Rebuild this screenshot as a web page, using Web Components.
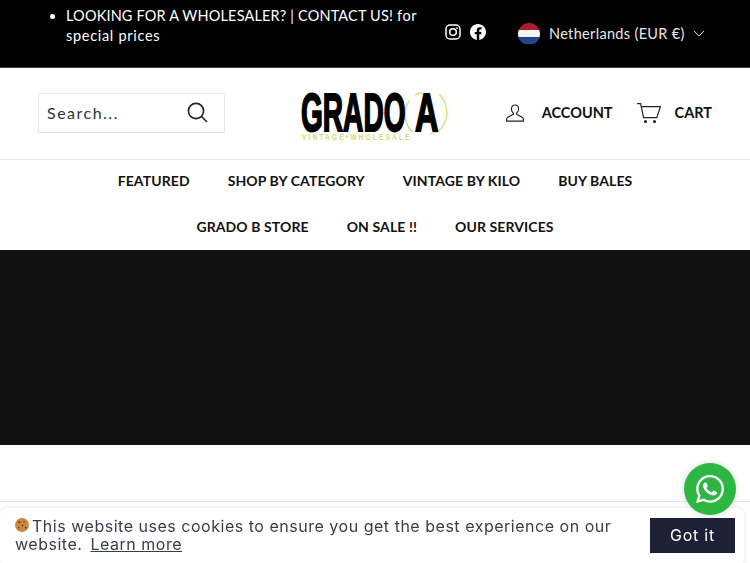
<!DOCTYPE html>
<html>
<head>
<meta charset="utf-8">
<title>Grado A</title>
<style>
html,body{margin:0;height:563px;overflow:hidden;background:#fff;}
body{font-family:"Lato","Open Sans",sans-serif;}
</style>
</head>
<body>
<top-bar>
  <span slot="promo">LOOKING FOR A WHOLESALER? | CONTACT US! </span><span slot="promo" style="letter-spacing:.7px">for</span>
  <span slot="promo2" style="display:block;letter-spacing:.7px">special prices</span>
</top-bar>
<site-header></site-header>
<site-nav>
  <nav-link>FEATURED</nav-link>
  <nav-link>SHOP BY CATEGORY</nav-link>
  <nav-link>VINTAGE BY KILO</nav-link>
  <nav-link>BUY BALES</nav-link>
  <nav-link>GRADO B STORE</nav-link>
  <nav-link>ON SALE !!</nav-link>
  <nav-link>OUR SERVICES</nav-link>
</site-nav>
<hero-block></hero-block>
<page-footer></page-footer>
<cookie-bar></cookie-bar>
<whatsapp-button></whatsapp-button>
<script>
class topBar extends HTMLElement{
    constructor(){
        super();
        this.attachShadow({mode:'open'});
        this.shadowRoot.innerHTML=`<style>
        :host{display:flex;height:67px;background:#000;color:#fff;border-bottom:1px solid #444;font:400 14.5px/20px "Lato",sans-serif;letter-spacing:.16px;}
        ul{margin:0;padding:6px 0 0 66px;width:360px;box-sizing:content-box;flex:none;}
        li{padding:0;}
        .social{display:flex;gap:9px;margin:24px 0 0 19px;flex:none;align-items:flex-start;}
        .social svg{display:block;width:16px;height:16px;}
        .country{display:flex;align-items:center;margin:0 0 0 32px;height:67px;color:#e8e8e8;font-size:14.5px;letter-spacing:.33px;}
        .flag{width:22px;height:22px;border-radius:50%;overflow:hidden;margin-right:9px;display:flex;flex-direction:column;}
        .flag i{flex:1;}
        .chev{margin-left:8px;}
        </style>
        <ul><li><slot name="promo"></slot><slot name="promo2"></slot></li></ul>
        <div class="social">
          <svg viewBox="0 0 16 16" fill="none" stroke="#fff" stroke-width="1.5"><rect x="1" y="1" width="14" height="14" rx="4"/><circle cx="8" cy="8" r="3.3"/><circle cx="12" cy="4" r=".6" fill="#fff" stroke-width=".6"/></svg>
          <svg viewBox="0 0 24 24" fill="#fff"><path d="M24 12.073c0-6.627-5.373-12-12-12s-12 5.373-12 12c0 5.99 4.388 10.954 10.125 11.854v-8.385H7.078v-3.47h3.047V9.43c0-3.007 1.792-4.669 4.533-4.669 1.312 0 2.686.235 2.686.235v2.953H15.83c-1.491 0-1.956.925-1.956 1.874v2.25h3.328l-.532 3.47h-2.796v8.385C19.612 23.027 24 18.062 24 12.073z"/></svg>
        </div>
        <div class="country">
          <span class="flag"><i style="background:#ae1c28"></i><i style="background:#f4f4f4"></i><i style="background:#21468b"></i></span>
          <span>Netherlands (EUR €)</span>
          <svg class="chev" width="12" height="7" viewBox="0 0 12 7" fill="none" stroke="#ddd" stroke-width="1"><path d="M1 1l5 5 5-5"/></svg>
        </div>`;
    }
}
class siteHeader extends HTMLElement{
    constructor(){
        super();
        this.attachShadow({mode:'open'});
        this.shadowRoot.innerHTML=`<style>
        :host{display:grid;grid-template-columns:225px 1fr auto;align-items:center;height:91px;padding:0 38px;border-bottom:1px solid #e6e6e6;color:#111;}
        .search{display:flex;align-items:center;justify-content:space-between;width:187px;height:40px;box-sizing:border-box;border:1px solid #e8e8e8;padding:0 16px 0 8px;margin-bottom:2px;font-size:16px;letter-spacing:1.5px;color:#333;}
        .search svg{display:block;}
        .right{display:flex;align-items:center;margin-bottom:2px;font:700 14.5px "Lato",sans-serif;}
        .right svg{display:block;}
        .acct{margin-right:18px;}
        .cart{margin:0 14px 0 24px;}
        </style>
        <div class="search"><span>Search...</span>
          <svg width="21" height="21" viewBox="0 0 21 21" fill="none" stroke="#222" stroke-width="1.6"><circle cx="9" cy="9" r="7.6"/><path d="M14.5 14.5l5.5 5.5"/></svg>
        </div>
        <grado-logo></grado-logo>
        <div class="right">
          <svg class="acct" width="18" height="18" viewBox="0 0 18 18" fill="none" stroke="#222" stroke-width="1.2"><path d="M9 1c2.2 0 3.6 1.7 3.6 3.9 0 1.9-1 3.3-1.8 4.1-.3.4-.2 1.2.3 1.5l5 2.7c.9.5 1.3 1.4 1.3 2.6v1.4H.6v-1.4c0-1.2.4-2.1 1.3-2.6l5-2.7c.5-.3.6-1.1.3-1.5-.8-.8-1.8-2.2-1.8-4.1C5.4 2.7 6.8 1 9 1z"/></svg>
          <span>ACCOUNT</span>
          <svg class="cart" width="24" height="20" viewBox="0 0 24 20" fill="none" stroke="#222" stroke-width="1.2"><path d="M0 .6h3.6l3 14h13.2L23.4 3.6H4.4"/><circle cx="8.5" cy="18.6" r=".9" fill="#222"/><circle cx="17.5" cy="18.6" r=".9" fill="#222"/></svg>
          <span>CART</span>
        </div>`;
    }
}
class gradoLogo extends HTMLElement{
    constructor(){
        super();
        this.attachShadow({mode:'open'});
        this.shadowRoot.innerHTML=`<style>
        :host{display:block;position:relative;width:155px;height:54px;margin-left:38px;overflow:visible;}
        .word{position:absolute;left:0;top:5px;font:900 54px/40px "Liberation Sans",sans-serif;color:#000;-webkit-text-stroke:2px #000;transform-origin:0 0;white-space:nowrap;}
        .g{transform:scaleX(.52);}
        .a{left:114px;transform:scaleX(.6);}
        .tag{position:absolute;left:1px;top:45px;font:700 9.5px/9px "Liberation Sans",sans-serif;letter-spacing:3px;color:#cfdc6f;white-space:nowrap;transform-origin:0 0;transform:scaleX(.7);}
        svg{position:absolute;left:102px;top:3px;}
        </style>
        <svg width="46" height="48" viewBox="0 0 46 48" fill="none" stroke="#d5e07f" stroke-width="1.5"><path d="M10 42C2 36-1 22 6 11"/><path d="M12 5c2-1 5-2 8-2"/><path d="M36 4c8 7 10 22 5 30-2 4-7 9-14 10"/></svg>
        <span class="word g">GRADO</span>
        <span class="word a">A</span>
        <span class="tag">VINTAGE•WHOLESALE</span>`;
    }
}
class siteNav extends HTMLElement{
    constructor(){
        super();
        this.attachShadow({mode:'open'});
        this.shadowRoot.innerHTML=`<style>
        :host{display:flex;flex-wrap:wrap;justify-content:center;width:600px;margin:0 auto;column-gap:38px;height:90px;padding-left:0;align-content:flex-start;}
        </style><slot></slot>`;
    }
}
class navLink extends HTMLElement{
    constructor(){
        super();
        this.attachShadow({mode:'open'});
        this.shadowRoot.innerHTML=`<style>
        :host{display:block;height:46px;font:700 14px/41px "Lato",sans-serif;letter-spacing:.1px;color:#111;white-space:nowrap;}
        </style><slot></slot>`;
    }
}
class heroBlock extends HTMLElement{
    constructor(){
        super();
        this.attachShadow({mode:'open'});
        this.shadowRoot.innerHTML=`<style>
        :host{display:block;height:195px;background:#111;}
        </style>`;
    }
}
class pageFooter extends HTMLElement{
    constructor(){
        super();
        this.attachShadow({mode:'open'});
        this.shadowRoot.innerHTML=`<style>
        :host{display:block;margin-top:56px;border-top:1px solid #e6e6e6;}
        </style>`;
    }
}
class cookieBar extends HTMLElement{
    constructor(){
        super();
        this.attachShadow({mode:'open'});
        this.shadowRoot.innerHTML=`<style>
        :host{position:fixed;left:0;right:6px;bottom:-4px;height:59px;box-sizing:border-box;display:flex;align-items:flex-start;justify-content:space-between;background:#fff;border-radius:8px;box-shadow:0 0 4px rgba(0,0,0,.12);padding:9px 9px 0 15px;font:400 16px/18px "Inter",sans-serif;color:#3a3d4a;}
        .msg{width:610px;letter-spacing:.52px;}
        svg{vertical-align:0;margin-right:3px;}
        a{color:#3a3d4a;text-decoration:underline;margin-left:8px;}
        button{width:85px;height:35px;margin-top:1px;padding:0 0 2px;background:#1c2135;color:#fff;border:0;border-radius:0;font:400 16px "Inter",sans-serif;letter-spacing:.8px;}
        </style>
        <div class="msg">
          <div><svg width="14" height="14" viewBox="0 0 13 13"><circle cx="6.5" cy="6.5" r="6.5" fill="#c98a3e"/><g fill="#5b3415"><circle cx="4" cy="4" r=".9"/><circle cx="8.5" cy="3.5" r=".7"/><circle cx="7" cy="7" r=".8"/><circle cx="3.5" cy="9" r=".7"/><circle cx="10" cy="9" r=".8"/></g></svg>This website uses cookies to ensure you get the best experience on our</div>
          <div><span>website.</span><a>Learn more</a></div>
        </div>
        <button>Got it</button>`;
    }
}
class whatsappButton extends HTMLElement{
    constructor(){
        super();
        this.attachShadow({mode:'open'});
        this.shadowRoot.innerHTML=`<style>
        :host{position:fixed;left:684px;top:463px;width:52px;height:52px;border-radius:50%;background:#2db742;display:flex;align-items:center;justify-content:center;box-shadow:0 0 6px rgba(0,0,0,.15);}
        svg{display:block;}
        </style>
        <svg width="28" height="28" viewBox="0 0 24 24" fill="#fff"><path d="M17.472 14.382c-.297-.149-1.758-.867-2.03-.967-.273-.099-.471-.148-.67.15-.197.297-.767.966-.94 1.164-.173.199-.347.223-.644.075-.297-.15-1.255-.463-2.39-1.475-.883-.788-1.48-1.761-1.653-2.059-.173-.297-.018-.458.13-.606.134-.133.298-.347.446-.52.149-.174.198-.298.298-.497.099-.198.05-.371-.025-.52-.075-.149-.669-1.612-.916-2.207-.242-.579-.487-.5-.669-.51-.173-.008-.371-.01-.57-.01-.198 0-.52.074-.792.372-.272.297-1.04 1.016-1.04 2.479 0 1.462 1.065 2.875 1.213 3.074.149.198 2.096 3.2 5.077 4.487.709.306 1.262.489 1.694.625.712.227 1.36.195 1.871.118.571-.085 1.758-.719 2.006-1.413.248-.694.248-1.289.173-1.413-.074-.124-.272-.198-.57-.347m-5.421 7.403h-.004a9.87 9.87 0 01-5.031-1.378l-.361-.214-3.741.982.998-3.648-.235-.374a9.86 9.86 0 01-1.51-5.26c.001-5.45 4.436-9.884 9.888-9.884 2.64 0 5.122 1.03 6.988 2.898a9.825 9.825 0 012.893 6.994c-.003 5.45-4.437 9.884-9.885 9.884m8.413-18.297A11.815 11.815 0 0012.05 0C5.495 0 .16 5.335.157 11.892c0 2.096.547 4.142 1.588 5.945L.057 24l6.305-1.654a11.882 11.882 0 005.683 1.448h.005c6.554 0 11.89-5.335 11.893-11.893a11.821 11.821 0 00-3.48-8.413z"/></svg>`;
    }
}
window.customElements.define('top-bar',topBar);
window.customElements.define('site-header',siteHeader);
window.customElements.define('grado-logo',gradoLogo);
window.customElements.define('site-nav',siteNav);
window.customElements.define('nav-link',navLink);
window.customElements.define('hero-block',heroBlock);
window.customElements.define('page-footer',pageFooter);
window.customElements.define('cookie-bar',cookieBar);
window.customElements.define('whatsapp-button',whatsappButton);
</script>
</body>
</html>
